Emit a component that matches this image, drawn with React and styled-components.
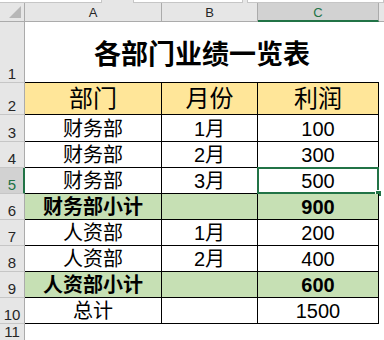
import React from "react";
import styled, { createGlobalStyle, css } from "styled-components";

const GlobalStyle = createGlobalStyle`
  html, body {
    margin: 0;
    padding: 0;
    background: #ffffff;
  }
  body {
    font-family: "Liberation Sans", "Noto Sans CJK SC", sans-serif;
  }
`;

const XL_GREEN = "#217346";
const CJK = `"Liberation Sans", "Noto Sans CJK SC", sans-serif`;

const Window = styled.div`
  width: 384px;
  height: 340px;
  overflow: hidden;
  display: flex;
  flex-direction: column;
  background: #e6e6e6;
`;

const TopStrip = styled.div`
  height: 13px;
  display: flex;
  align-items: flex-start;
  gap: 0;
  background: #e6e6e6;
`;

const Box = styled.div`
  height: 2px;
  width: ${(p) => p.$w || "auto"};
  flex: ${(p) => (p.$grow ? 1 : "none")};
  margin-left: ${(p) => p.$ml || "0px"};
  background: #ffffff;
  border-bottom: 1px solid #c6c6c6;
  border-right: 1px solid #c6c6c6;
  border-left: ${(p) => (p.$bl ? "1px solid #c6c6c6" : "none")};
`;

const Sheet = styled.div`
  flex: 1;
  display: grid;
  grid-template-columns: 25px 137px 96px 121px 1fr;
  grid-template-rows: 19px 61px 32px 27px repeat(7, 26px) 1fr;
  background: #ffffff;
`;

const Corner = styled.div`
  background: #e6e6e6;
  border-right: 1px solid #ababab;
  border-bottom: 1px solid #ababab;
  display: flex;
  align-items: flex-end;
  justify-content: flex-end;
  padding: 0 3px 3px 0;
  box-sizing: border-box;
`;

const ColHead = styled.div`
  box-sizing: border-box;
  display: flex;
  align-items: center;
  justify-content: center;
  background: #e6e6e6;
  color: #262626;
  font-size: 13px;
  border-bottom: 1px solid #ababab;
  border-right: ${(p) => (p.$last ? "none" : "1px solid #ababab")};
  padding-top: 1px;
  ${(p) =>
    p.$selected &&
    css`
      background: #d2d2d2;
      color: ${XL_GREEN};
      border-bottom: 2px solid ${XL_GREEN};
      padding-top: 2px;
    `}
`;

const RowHead = styled.div`
  box-sizing: border-box;
  display: flex;
  align-items: flex-end;
  justify-content: center;
  background: #e6e6e6;
  color: #262626;
  font-size: 15px;
  line-height: 15px;
  padding-bottom: 1px;
  border-right: 1px solid #ababab;
  border-bottom: 1px solid #c6c6c6;
  ${(p) =>
    p.$selected &&
    css`
      background: #d2d2d2;
      color: ${XL_GREEN};
      border-right: 2px solid ${XL_GREEN};
      padding-left: 1px;
    `}
`;

const TitleCell = styled.div`
  grid-column: span 3;
  box-sizing: border-box;
  display: flex;
  align-items: center;
  justify-content: center;
  border-bottom: 1px solid #000000;
  font-family: ${CJK};
  font-size: 27px;
  font-weight: 700;
  color: #000000;
  padding-top: 1px;
`;

const fills = {
  head: "#ffe699",
  sub: "#c6e0b4",
  none: "#ffffff",
};

const Cell = styled.div`
  position: relative;
  box-sizing: border-box;
  display: flex;
  align-items: ${(p) => (p.$head ? "center" : "flex-end")};
  justify-content: center;
  background: ${(p) => fills[p.$fill || "none"]};
  border-right: 1px solid #000000;
  border-bottom: 1px solid #000000;
  font-family: ${CJK};
  font-size: ${(p) => (p.$head ? "24px" : "20px")};
  line-height: ${(p) => (p.$head ? "24px" : "20px")};
  font-weight: ${(p) => (p.$bold ? 700 : 400)};
  color: #000000;
  padding-bottom: ${(p) => (p.$head ? "0px" : "2px")};
  white-space: nowrap;
`;

const Blank = styled.div`
  background: #ffffff;
`;

const HeadFill = styled.div`
  background: #e6e6e6;
  border-bottom: 1px solid #ababab;
`;

const Selection = styled.div`
  position: absolute;
  top: -1px;
  left: -1px;
  right: -1px;
  bottom: -1px;
  border: 2px solid ${XL_GREEN};
  pointer-events: none;
`;

const Handle = styled.div`
  position: absolute;
  right: -5px;
  bottom: -5px;
  width: 5px;
  height: 5px;
  background: ${XL_GREEN};
  border: 1px solid #ffffff;
`;

const CornerMark = () => (
  <svg width="12" height="12" viewBox="0 0 12 12">
    <polygon points="12,0 12,12 0,12" fill="#b7b7b7" />
  </svg>
);

const rows = [
  { n: 3, cells: ["财务部", "1月", "100"] },
  { n: 4, cells: ["财务部", "2月", "300"] },
  { n: 5, cells: ["财务部", "3月", "500"], selected: true },
  { n: 6, cells: ["财务部小计", "", "900"], fill: "sub", bold: true },
  { n: 7, cells: ["人资部", "1月", "200"] },
  { n: 8, cells: ["人资部", "2月", "400"] },
  { n: 9, cells: ["人资部小计", "", "600"], fill: "sub", bold: true },
  { n: 10, cells: ["总计", "", "1500"] },
];

export default function App() {
  return (
    <>
      <GlobalStyle />
      <Window>
        <TopStrip>
          <Box $w="101px" />
          <Box $w="108px" $ml="31px" $bl />
          <Box $grow $ml="4px" $bl />
        </TopStrip>
        <Sheet>
          <Corner>
            <CornerMark />
          </Corner>
          <ColHead>A</ColHead>
          <ColHead>B</ColHead>
          <ColHead $selected>C</ColHead>
          <HeadFill />

          <RowHead>1</RowHead>
          <TitleCell>各部门业绩一览表</TitleCell>
          <Blank />

          <RowHead>2</RowHead>
          <Cell $head $fill="head">部门</Cell>
          <Cell $head $fill="head">月份</Cell>
          <Cell $head $fill="head">利润</Cell>
          <Blank />

          {rows.map((r) => (
            <React.Fragment key={r.n}>
              <RowHead $selected={r.selected}>{r.n}</RowHead>
              {r.cells.map((c, i) => (
                <Cell key={i} $fill={r.fill} $bold={r.bold}>
                  {c}
                  {r.selected && i === 2 && (
                    <Selection>
                      <Handle />
                    </Selection>
                  )}
                </Cell>
              ))}
              <Blank />
            </React.Fragment>
          ))}

          <RowHead>11</RowHead>
          <Blank />
          <Blank />
          <Blank />
          <Blank />
        </Sheet>
      </Window>
    </>
  );
}
